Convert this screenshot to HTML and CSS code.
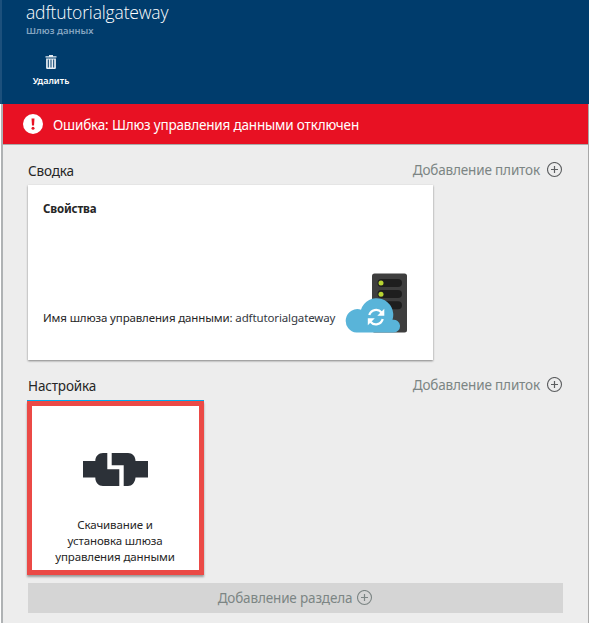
FILE: index.html
```html
<!DOCTYPE html>
<html lang="ru">
<head>
<meta charset="utf-8">
<title>adftutorialgateway</title>
<link rel="stylesheet" href="styles.css">
</head>
<body>
<svg width="0" height="0" class="defs" aria-hidden="true">
  <symbol id="plus" viewBox="0 0 16 16">
    <circle cx="7.500" cy="7.500" r="7" fill="none" stroke="currentColor" stroke-width="1.100"/>
    <path d="M7.500 4v7M4 7.500h7" fill="none" stroke="currentColor" stroke-width="1.200"/>
  </symbol>
</svg>
<header class="header">
  <h1 class="title">adftutorialgateway</h1>
  <p class="subtitle">Шлюз данных</p>
  <button class="command">
    <svg class="trash" width="12" height="14" viewBox="0 0 12 14" aria-hidden="true">
      <path d="M.5 2.500V1.300h3.500V0h4v1.300h3.500v1.200z" fill="#e6edf3"/>
      <path d="M1.100 3.400h9.800V13a1 1 0 0 1-1 1H2.100a1 1 0 0 1-1-1z" fill="#e6edf3"/>
      <path d="M3.300 4.500V12.500M6 4.500V12.500M8.700 4.500V12.500" stroke="#003c6c" stroke-width="1"/>
    </svg>
    <span>Удалить</span>
  </button>
</header>
<main class="body">
  <div class="alert">
    <svg width="20" height="20" viewBox="0 0 20 20" aria-hidden="true">
      <circle cx="10" cy="10" r="10" fill="#fff"/>
      <path d="M8.500 4.500h3l-.5 7H9z" fill="#e81123"/>
      <circle cx="10" cy="14.300" r="1.500" fill="#e81123"/>
    </svg>
    <span>Ошибка: Шлюз управления данными отключен</span>
  </div>
  <section class="section summary">
    <div class="section-head">
      <h2>Сводка</h2>
      <a class="add"><span>Добавление плиток</span><svg width="16" height="16"><use href="#plus"/></svg></a>
    </div>
    <article class="card">
      <h3>Свойства</h3>
      <div class="card-row">
        <p>Имя шлюза управления данными: <span class="value">adftutorialgateway</span></p>
        <svg class="cloud" width="63" height="60" viewBox="0 0 63 60" aria-hidden="true">
          <rect x="28" y="0.500" width="35" height="59" rx="2.500" fill="#3e3e3e"/>
          <g fill="#1e1e1e">
            <rect x="33.500" y="6" width="24.500" height="8" rx="4"/>
            <rect x="33.500" y="17" width="24.500" height="8" rx="4"/>
            <rect x="33.500" y="28.300" width="24.500" height="8" rx="4"/>
          </g>
          <circle cx="37" cy="10" r="2.500" fill="#b8d432"/>
          <circle cx="37" cy="21.200" r="2.500" fill="#b8d432"/>
          <path d="M12.500 59.500A11.700 11.700 0 1 1 17 36.700A16.300 16.300 0 1 1 48.500 46.800A6.400 6.400 0 1 1 49.500 59.500z" fill="#59b4d9"/>
          <g fill="none" stroke="#fff" stroke-width="2.300">
            <path d="M25.300 42A7 7 0 0 1 37.500 39.500"/>
            <path d="M38.700 46A7 7 0 0 1 26.500 48.700"/>
          </g>
          <path d="M40.300 35.800v7h-7zM23.800 52.300v-7h7z" fill="#fff"/>
        </svg>
      </div>
    </article>
  </section>
  <section class="section setup">
    <div class="section-head">
      <h2>Настройка</h2>
      <a class="add"><span>Добавление плиток</span><svg width="16" height="16"><use href="#plus"/></svg></a>
    </div>
    <article class="tile">
      <svg width="65" height="33" viewBox="0 0 65 33" aria-hidden="true">
        <path d="M0 8h12.300C12.300 3.200 15.700 0 20 0h4.300v16.300h12V33H20c-4.300 0-7.700-3.200-7.700-8.500H0z" fill="#2c3138"/>
        <path d="M28.700 0H45c4.300 0 7.500 3.200 7.500 8H65v16.500H52.500C52 29.800 49 33 45 33h-4.300V12.300h-12z" fill="#2c3138"/>
      </svg>
      <p>Скачивание и<br>установка шлюза<br>управления данными</p>
    </article>
  </section>
  <button class="add-section"><span>Добавление раздела</span><svg width="16" height="16"><use href="#plus"/></svg></button>
</main>
</body>
</html>
```
FILE: styles.css
```css
* { box-sizing: border-box; }
body {
  margin: 0;
  height: 623px;
  overflow: hidden;
  background: #fff;
  color: #262626;
  font-family: "Noto Sans", "Open Sans", sans-serif;
}
h1, h2, h3, p { margin: 0; font-weight: 400; }
button { border: 0; padding: 0; font-family: inherit; }
svg { display: block; flex: none; }
.defs { display: none; }

.header {
  height: 104px;
  padding-left: 24px;
  border-left: 2px solid #1c507c;
  background: #003c6c;
  color: #fff;
}
.title {
  height: 24px;
  font-family: "Open Sans", "Noto Sans", sans-serif;
  font-size: 17.5px;
  line-height: 24px;
  font-weight: 350;
  letter-spacing: -0.15px;
}
.subtitle { height: 14px; font-size: 9.5px; line-height: 14px; font-weight: 600; color: #84a4c0; }
.command {
  display: flex;
  flex-direction: column;
  align-items: center;
  width: 38px;
  margin: 17px 0 0 6px;
  background: none;
  color: #fff;
  font-size: 9px;
  line-height: 12px;
  font-weight: 600;
}
.trash { margin-bottom: 6px; }

.body {
  height: 519px;
  margin-left: 1px;
  border-left: 2px solid #afb2b4;
  border-right: 1px solid #a8a8a8;
  background: #ededed;
}
.alert {
  display: flex;
  align-items: center;
  gap: 10px;
  height: 41px;
  padding-left: 20px;
  border-bottom: 1px solid #aaa;
  background: #e81123;
  color: #fff;
  font-size: 13.5px;
  letter-spacing: -0.18px;
}
.alert span { padding-top: 2px; }
.section { padding: 0 25px; }
.section-head { display: flex; justify-content: space-between; color: #262626; }
.section-head h2 { font-size: 13.5px; line-height: 20px; letter-spacing: -0.15px; }
.summary .section-head { height: 40px; padding-top: 16px; }
.setup .section-head { height: 41px; padding-top: 16px; }
.add {
  display: flex;
  align-items: center;
  gap: 7px;
  height: 18px;
  color: #7c8584;
  font-size: 13.5px;
  letter-spacing: -0.15px;
}
.add svg { color: #5c5e60; }

.card {
  width: 405px;
  height: 175px;
  padding: 16px 26px 0 15px;
  background: #fff;
  box-shadow: 0 1px 2px rgba(0, 0, 0, 0.45);
}
.card h3 { height: 72px; font-size: 11.5px; line-height: 16px; font-weight: 700; letter-spacing: -0.15px; }
.card-row { display: flex; justify-content: space-between; }
.card-row p {
  padding-top: 37px;
  font-size: 11.5px;
  line-height: 16px;
  letter-spacing: -0.13px;
  white-space: nowrap;
}
.value { color: #343942; }

.tile {
  display: flex;
  flex-direction: column;
  align-items: center;
  width: 177px;
  height: 174px;
  margin-left: -1px;
  padding-top: 47px;
  border: 5px solid #eb4a46;
  background: #fff;
  box-shadow: 0 -1px 0 #00abec, 0 2px 2px rgba(0, 0, 0, 0.35);
}
.tile p {
  margin: 31px 1px 0 0;
  font-size: 11.5px;
  line-height: 16px;
  letter-spacing: -0.12px;
  text-align: center;
}

.add-section {
  display: flex;
  align-items: center;
  justify-content: center;
  gap: 5px;
  width: 535px;
  height: 30px;
  margin: 8px 0 0 25px;
  background: #d5d5d5;
  color: #7c8584;
  font-size: 13.5px;
  letter-spacing: -0.15px;
}
```
